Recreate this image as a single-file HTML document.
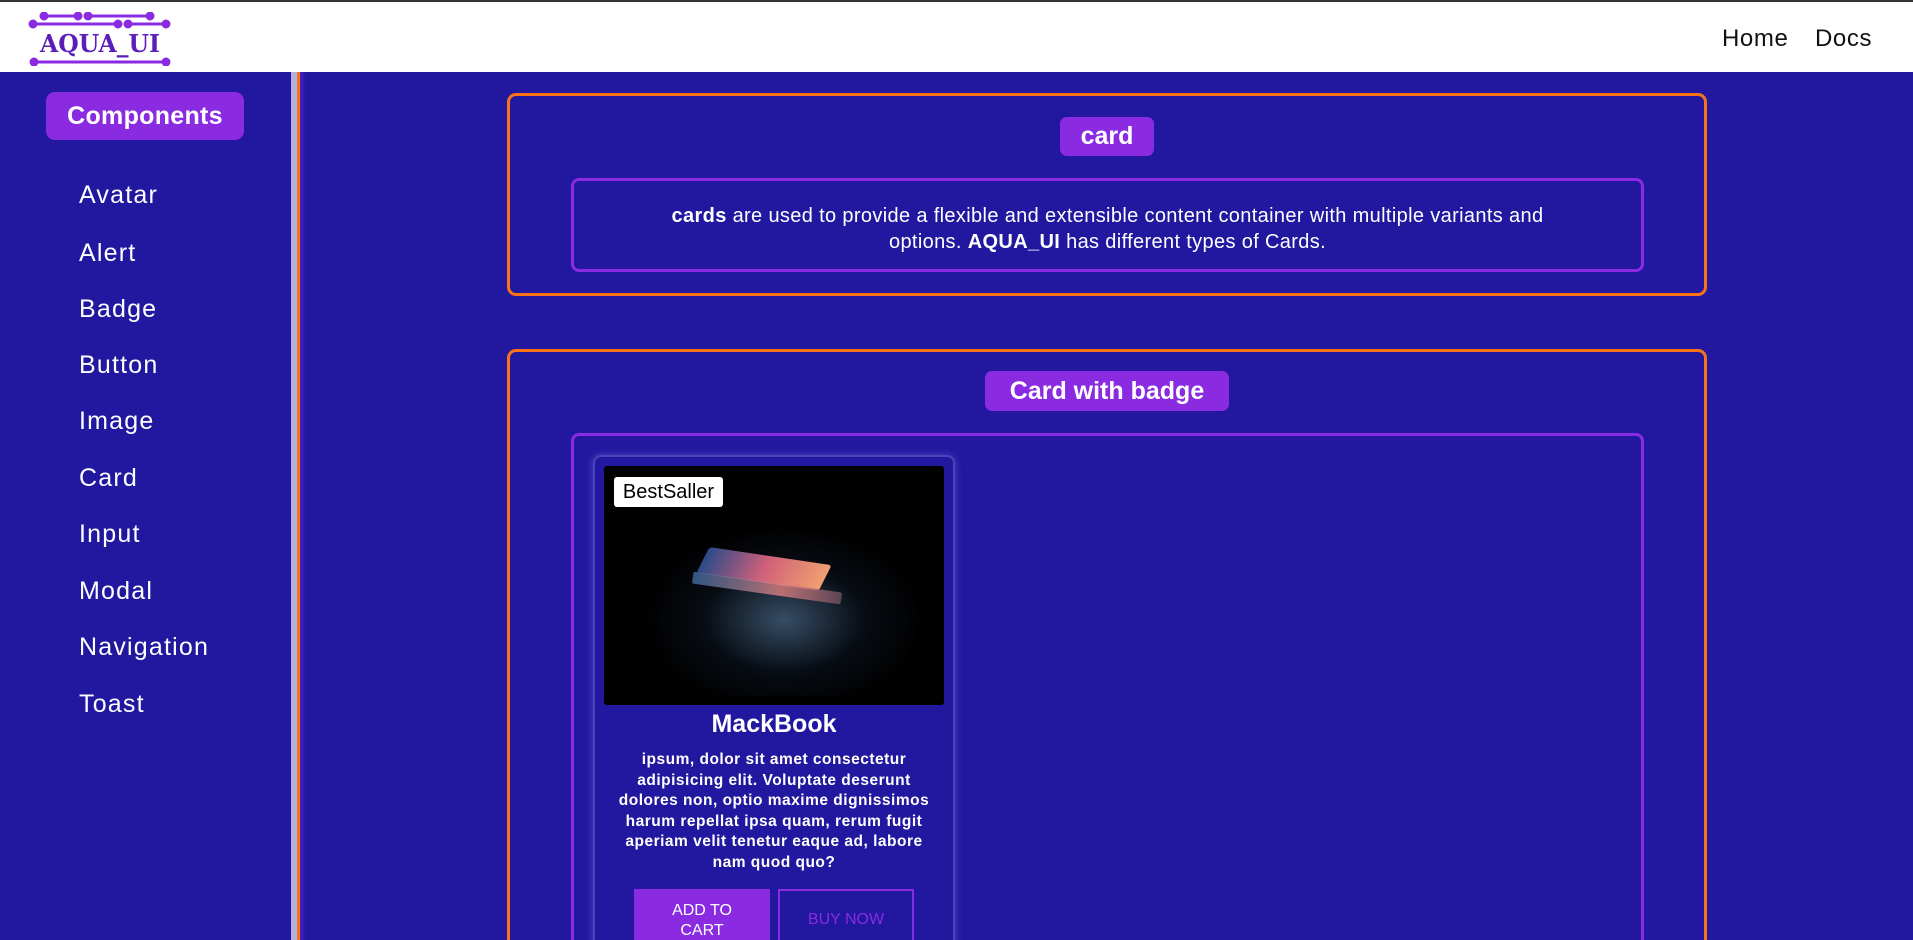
<!DOCTYPE html>
<html style="width:1913px;height:940px;overflow:hidden"><head><meta charset="utf-8"><style>
*{box-sizing:border-box;margin:0;padding:0}
body{width:1913px;height:940px;overflow:hidden;background:#21189f;font-family:"Liberation Sans",sans-serif}
#w{position:relative;width:1913px;height:940px;overflow:hidden}
.top{position:absolute;left:0;top:0;width:1913px;height:2px;background:#333}
.hdr{position:absolute;left:0;top:2px;width:1913px;height:70px;background:#fff}
.nav{position:absolute;top:23px;font-size:24px;letter-spacing:0.6px;color:#111}
.comp{position:absolute;left:46px;top:92px;width:198px;height:48px;background:#8a2be2;border-radius:9px;color:#fff;font-weight:bold;font-size:25px;letter-spacing:0.3px;text-align:center;line-height:48px}
.item{position:absolute;left:79px;color:#fff;font-size:25px;letter-spacing:1.2px}
.bar1{position:absolute;left:291px;top:72px;width:6px;height:868px;background:#b3b0e0}
.bar2{position:absolute;left:297px;top:72px;width:3px;height:868px;background:#f97316}
.shadow{position:absolute;left:300px;top:72px;width:6px;height:868px;background:linear-gradient(90deg,#4a1fc0,#21189f)}
.box{position:absolute;left:507px;width:1200px;border:3px solid #f97316;border-radius:9px}
.pill{position:absolute;background:#8a2be2;color:#fff;font-weight:bold;font-size:25px;border-radius:7px;text-align:center}
.inner{position:absolute;left:571px;width:1073px;border:3px solid #8a2be2;border-radius:8px}
.desc{color:#fff;font-size:20px;letter-spacing:0.35px;text-align:center;line-height:26px;padding:22px 60px}
.card{position:absolute;left:593px;top:455px;width:362px;height:520px;border:2px solid #4a44b8;border-radius:8px;box-shadow:0 0 8px rgba(140,140,255,.4)}
.img{position:absolute;left:604px;top:466px;width:340px;height:239px;background:#000;border-radius:3px;overflow:hidden}
</style></head><body><div id="w">
<div class="top"></div>
<div class="hdr">
<svg style="position:absolute;left:28px;top:10px" width="145" height="54" viewBox="0 0 145 54">
<g stroke="#8a2be2" stroke-width="3" fill="#8a2be2">
<line x1="16" y1="4" x2="50" y2="4"/><line x1="58" y1="4" x2="122" y2="4"/>
<line x1="5" y1="12" x2="90" y2="12"/><line x1="100" y1="12" x2="138" y2="12"/>
<line x1="6" y1="50" x2="138" y2="50"/>
<circle cx="16" cy="4" r="3"/><circle cx="50" cy="4" r="3"/><circle cx="60" cy="4" r="3"/><circle cx="122" cy="4" r="3"/>
<circle cx="5" cy="12" r="3"/><circle cx="90" cy="12" r="3"/><circle cx="100" cy="12" r="3"/><circle cx="138" cy="12" r="3"/>
<circle cx="6" cy="50" r="3"/><circle cx="138" cy="50" r="3"/>
</g>
<text x="72" y="40" text-anchor="middle" font-family="DejaVu Serif,serif" font-weight="bold" font-size="24" textLength="120" lengthAdjust="spacingAndGlyphs" fill="#5b1fb8">AQUA_UI</text>
</svg>
<div class="nav" style="left:1722px">Home</div>
<div class="nav" style="left:1815px">Docs</div>
</div>
<div class="comp">Components</div>
<div class="item" style="top:181px">Avatar</div>
<div class="item" style="top:239px">Alert</div>
<div class="item" style="top:295px">Badge</div>
<div class="item" style="top:351px">Button</div>
<div class="item" style="top:407px">Image</div>
<div class="item" style="top:464px">Card</div>
<div class="item" style="top:520px">Input</div>
<div class="item" style="top:577px">Modal</div>
<div class="item" style="top:633px">Navigation</div>
<div class="item" style="top:690px">Toast</div>
<div class="bar1"></div><div class="bar2"></div><div class="shadow"></div>

<div class="box" style="top:93px;height:203px"></div>
<div class="pill" style="left:1060px;top:117px;width:94px;height:39px;line-height:39px">card</div>
<div class="inner" style="top:178px;height:94px"><div class="desc"><b>cards</b> are used to provide a flexible and extensible content container with multiple variants and options. <b>AQUA_UI</b> has different types of Cards.</div></div>

<div class="box" style="top:349px;height:640px"></div>
<div class="pill" style="left:985px;top:371px;width:244px;height:40px;line-height:40px">Card with badge</div>
<div class="inner" style="top:433px;height:560px"></div>
<div class="card"></div>
<div class="img">
<div style="position:absolute;left:40px;top:60px;width:280px;height:170px;background:radial-gradient(ellipse at 50% 55%,rgba(90,130,170,.6),rgba(30,50,80,.25) 40%,transparent 70%)"></div>
<div style="position:absolute;left:95px;top:90px;width:130px;height:26px;background:linear-gradient(90deg,#2a4a8a,#d0607a 50%,#f0a070);transform:skewX(-20deg) rotate(8deg);border-radius:3px"></div>
<div style="position:absolute;left:88px;top:116px;width:150px;height:12px;background:linear-gradient(90deg,#3a6aa0,#e08080 60%,#705060);transform:rotate(8deg);border-radius:2px;opacity:.8"></div>
</div>
<div style="position:absolute;left:614px;top:477px;width:109px;height:30px;background:#fff;border-radius:3px;font-size:20px;line-height:30px;text-align:center;color:#000">BestSaller</div>
<div style="position:absolute;left:593px;top:710px;width:362px;text-align:center;color:#fff;font-weight:bold;font-size:25px">MackBook</div>
<div style="position:absolute;left:607px;top:750px;width:334px;text-align:center;color:#fff;font-weight:bold;font-size:15.5px;letter-spacing:0.5px;line-height:20.5px">ipsum, dolor sit amet consectetur adipisicing elit. Voluptate deserunt dolores non, optio maxime dignissimos harum repellat ipsa quam, rerum fugit aperiam velit tenetur eaque ad, labore nam quod quo?</div>
<div style="position:absolute;left:634px;top:889px;width:136px;height:60px;background:#8a2be2;color:#fff;font-size:16px;text-align:center;padding-top:12px;line-height:20px">ADD TO<br>CART</div>
<div style="position:absolute;left:778px;top:889px;width:136px;height:60px;border:2px solid #8a2be2;color:#8a2be2;font-size:16px;text-align:center;padding-top:20px">BUY NOW</div>
</div></body></html>
